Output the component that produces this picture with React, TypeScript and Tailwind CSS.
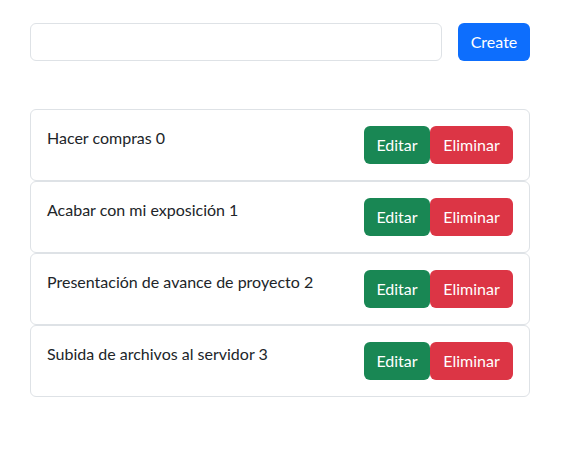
const tasks = [
  "Hacer compras 0",
  "Acabar con mi exposición 1",
  "Presentación de avance de proyecto 2",
  "Subida de archivos al servidor 3",
];

export default function App() {
  return (
    <div className="min-h-screen bg-white text-[#212529] text-base font-['Segoe_UI','Lato',sans-serif]">
      <div className="ml-[30px] w-[500px] pt-[23px]">
        <div className="flex gap-4">
          <input
            type="text"
            className="h-[38px] flex-1 rounded-[6px] border border-[#dee2e6] px-3 outline-none"
          />
          <button className="h-[38px] w-[72px] rounded-[6px] bg-[#0d6efd] text-white">
            Create
          </button>
        </div>

        <div className="mt-[48px] flex flex-col">
          {tasks.map((task) => (
            <div
              key={task}
              className="flex h-[72px] justify-between rounded-[6px] border border-[#dee2e6] p-4"
            >
              <span className="leading-6">{task}</span>
              <div className="flex">
                <button className="h-[38px] w-[66px] rounded-[6px] bg-[#198754] text-white">
                  Editar
                </button>
                <button className="h-[38px] w-[83px] rounded-[6px] bg-[#dc3545] text-white">
                  Eliminar
                </button>
              </div>
            </div>
          ))}
        </div>
      </div>
    </div>
  );
}
